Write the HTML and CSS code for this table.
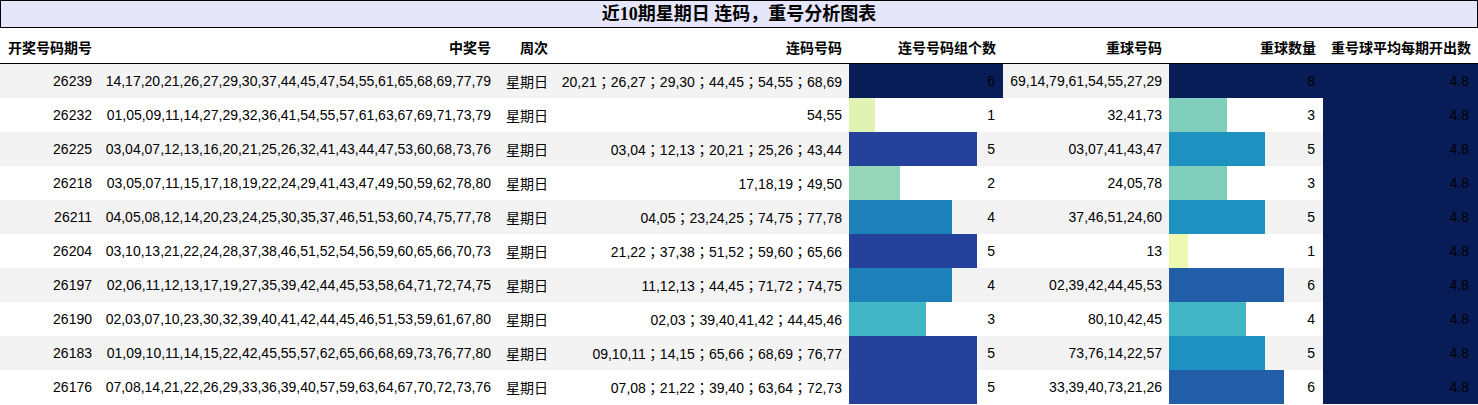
FILE: index.html
```html
<!DOCTYPE html>
<html lang="zh">
<head>
<meta charset="utf-8">
<title>近10期星期日 连码，重号分析图表</title>
<link rel="stylesheet" href="styles.css">
</head>
<body>
<div class="report">
  <div class="title">近10期星期日 连码，重号分析图表</div>
  <div class="row head">
    <div class="cell">开奖号码期号</div>
    <div class="cell">中奖号</div>
    <div class="cell">周次</div>
    <div class="cell">连码号码</div>
    <div class="cell">连号号码组个数</div>
    <div class="cell">重球号码</div>
    <div class="cell">重球数量</div>
    <div class="cell">重号球平均每期开出数</div>
  </div>

  <div class="row">
    <div class="cell">26239</div>
    <div class="cell">14,17,20,21,26,27,29,30,37,44,45,47,54,55,61,65,68,69,77,79</div>
    <div class="cell">星期日</div>
    <div class="cell seq">20,21；26,27；29,30；44,45；54,55；68,69</div>
    <div class="cell bar" style="--w:100%;--c:#081d58">6</div>
    <div class="cell">69,14,79,61,54,55,27,29</div>
    <div class="cell bar" style="--w:100%;--c:#081d58">8</div>
    <div class="cell avg">4.8</div>
  </div>
  <div class="row">
    <div class="cell">26232</div>
    <div class="cell">01,05,09,11,14,27,29,32,36,41,54,55,57,61,63,67,69,71,73,79</div>
    <div class="cell">星期日</div>
    <div class="cell seq">54,55</div>
    <div class="cell bar" style="--w:16.667%;--c:#e1f3b3">1</div>
    <div class="cell">32,41,73</div>
    <div class="cell bar" style="--w:37.5%;--c:#7fcdbb">3</div>
    <div class="cell avg">4.8</div>
  </div>
  <div class="row">
    <div class="cell">26225</div>
    <div class="cell">03,04,07,12,13,16,20,21,25,26,32,41,43,44,47,53,60,68,73,76</div>
    <div class="cell">星期日</div>
    <div class="cell seq">03,04；12,13；20,21；25,26；43,44</div>
    <div class="cell bar" style="--w:83.333%;--c:#24419b">5</div>
    <div class="cell">03,07,41,43,47</div>
    <div class="cell bar" style="--w:62.5%;--c:#1d91c0">5</div>
    <div class="cell avg">4.8</div>
  </div>
  <div class="row">
    <div class="cell">26218</div>
    <div class="cell">03,05,07,11,15,17,18,19,22,24,29,41,43,47,49,50,59,62,78,80</div>
    <div class="cell">星期日</div>
    <div class="cell seq">17,18,19；49,50</div>
    <div class="cell bar" style="--w:33.333%;--c:#97d5b9">2</div>
    <div class="cell">24,05,78</div>
    <div class="cell bar" style="--w:37.5%;--c:#7fcdbb">3</div>
    <div class="cell avg">4.8</div>
  </div>
  <div class="row">
    <div class="cell">26211</div>
    <div class="cell">04,05,08,12,14,20,23,24,25,30,35,37,46,51,53,60,74,75,77,78</div>
    <div class="cell">星期日</div>
    <div class="cell seq">04,05；23,24,25；74,75；77,78</div>
    <div class="cell bar" style="--w:66.667%;--c:#1e80b8">4</div>
    <div class="cell">37,46,51,24,60</div>
    <div class="cell bar" style="--w:62.5%;--c:#1d91c0">5</div>
    <div class="cell avg">4.8</div>
  </div>
  <div class="row">
    <div class="cell">26204</div>
    <div class="cell">03,10,13,21,22,24,28,37,38,46,51,52,54,56,59,60,65,66,70,73</div>
    <div class="cell">星期日</div>
    <div class="cell seq">21,22；37,38；51,52；59,60；65,66</div>
    <div class="cell bar" style="--w:83.333%;--c:#24419b">5</div>
    <div class="cell">13</div>
    <div class="cell bar" style="--w:12.5%;--c:#edf8b1">1</div>
    <div class="cell avg">4.8</div>
  </div>
  <div class="row">
    <div class="cell">26197</div>
    <div class="cell">02,06,11,12,13,17,19,27,35,39,42,44,45,53,58,64,71,72,74,75</div>
    <div class="cell">星期日</div>
    <div class="cell seq">11,12,13；44,45；71,72；74,75</div>
    <div class="cell bar" style="--w:66.667%;--c:#1e80b8">4</div>
    <div class="cell">02,39,42,44,45,53</div>
    <div class="cell bar" style="--w:75%;--c:#225ea8">6</div>
    <div class="cell avg">4.8</div>
  </div>
  <div class="row">
    <div class="cell">26190</div>
    <div class="cell">02,03,07,10,23,30,32,39,40,41,42,44,45,46,51,53,59,61,67,80</div>
    <div class="cell">星期日</div>
    <div class="cell seq">02,03；39,40,41,42；44,45,46</div>
    <div class="cell bar" style="--w:50%;--c:#41b6c4">3</div>
    <div class="cell">80,10,42,45</div>
    <div class="cell bar" style="--w:50%;--c:#41b6c4">4</div>
    <div class="cell avg">4.8</div>
  </div>
  <div class="row">
    <div class="cell">26183</div>
    <div class="cell">01,09,10,11,14,15,22,42,45,55,57,62,65,66,68,69,73,76,77,80</div>
    <div class="cell">星期日</div>
    <div class="cell seq">09,10,11；14,15；65,66；68,69；76,77</div>
    <div class="cell bar" style="--w:83.333%;--c:#24419b">5</div>
    <div class="cell">73,76,14,22,57</div>
    <div class="cell bar" style="--w:62.5%;--c:#1d91c0">5</div>
    <div class="cell avg">4.8</div>
  </div>
  <div class="row">
    <div class="cell">26176</div>
    <div class="cell">07,08,14,21,22,26,29,33,36,39,40,57,59,63,64,67,70,72,73,76</div>
    <div class="cell">星期日</div>
    <div class="cell seq">07,08；21,22；39,40；63,64；72,73</div>
    <div class="cell bar" style="--w:83.333%;--c:#24419b">5</div>
    <div class="cell">33,39,40,73,21,26</div>
    <div class="cell bar" style="--w:75%;--c:#225ea8">6</div>
    <div class="cell avg">4.8</div>
  </div>
</div>
</body>
</html>
```

FILE: styles.css
```css
html, body {
  margin: 0;
  padding: 0;
  background: #fff;
}

.report {
  width: 1478px;
  font-family: "Liberation Sans", "Noto Sans CJK SC", sans-serif;
  font-size: 14px;
  color: #000;
}

.title {
  box-sizing: border-box;
  height: 28px;
  border: 1px solid #000;
  background: #e6e6fa;
  text-align: center;
  font-family: "Liberation Serif", "Noto Sans CJK SC", serif;
  font-weight: bold;
  font-size: 18px;
  line-height: 26px;
}

.row {
  display: grid;
  grid-template-columns: 99px 399px 57px 294px 154px 166px 154px 155px;
  height: 34px;
}

.row:nth-child(odd) {
  background: #f3f3f3;
}

.row.head {
  box-sizing: border-box;
  height: 36px;
  background: #fff;
  border-bottom: 1px solid #000;
  font-family: "Noto Sans CJK SC", sans-serif;
  font-weight: bold;
}

.cell {
  display: flex;
  align-items: center;
  justify-content: flex-end;
  padding: 0 7px;
  white-space: nowrap;
  overflow: hidden;
}

.row.head .cell {
  padding-top: 2px;
}

.seq {
  font-family: "Liberation Sans", "Noto Sans CJK TC", sans-serif;
}

.bar {
  padding-right: 8px;
  background: linear-gradient(90deg, var(--c) var(--w), transparent var(--w));
}

.avg {
  padding-right: 9px;
  background: #081d58;
}
```
